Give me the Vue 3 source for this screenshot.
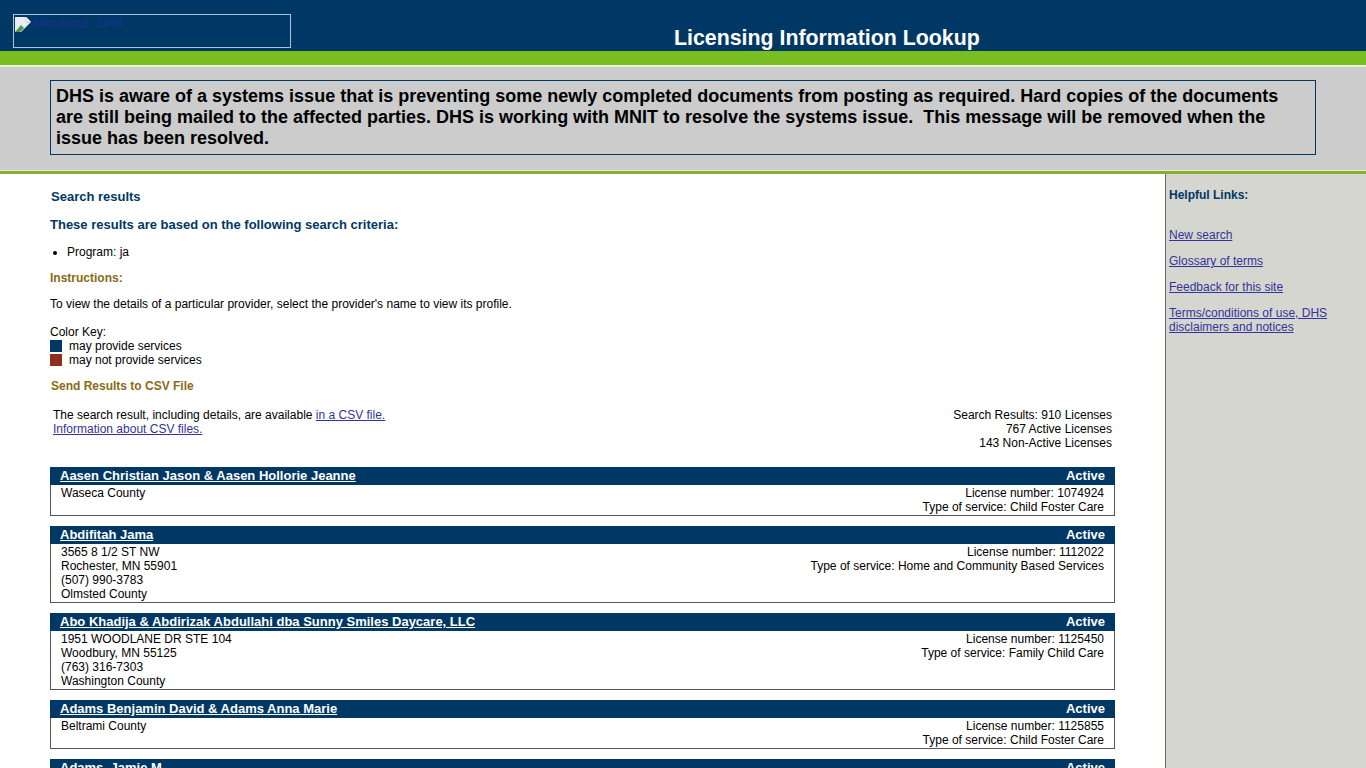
<script setup>
const links = ['New search', 'Glossary of terms', 'Feedback for this site', 'Terms/conditions of use, DHS disclaimers and notices']

const results = [
  { name: 'Aasen Christian Jason & Aasen Hollorie Jeanne', address: ['Waseca County'], license: '1074924', service: 'Child Foster Care' },
  { name: 'Abdifitah Jama', address: ['3565 8 1/2 ST NW', 'Rochester, MN 55901', '(507) 990-3783', 'Olmsted County'], license: '1112022', service: 'Home and Community Based Services' },
  { name: 'Abo Khadija & Abdirizak Abdullahi dba Sunny Smiles Daycare, LLC', address: ['1951 WOODLANE DR STE 104', 'Woodbury, MN 55125', '(763) 316-7303', 'Washington County'], license: '1125450', service: 'Family Child Care' },
  { name: 'Adams Benjamin David & Adams Anna Marie', address: ['Beltrami County'], license: '1125855', service: 'Child Foster Care' },
  { name: 'Adams, Jamie M', address: ['Hennepin County'], license: '1100000', service: 'Child Foster Care' }
]
</script>

<template>
  <div class="page">
    <header class="top">
      <a class="logo" href="#">
        <svg width="18" height="17" viewBox="0 0 18 17">
          <path d="M1 1h11l5 5-5 5-5 5H1z" fill="#e8eef2" />
          <path d="M1 16l6-7 3 3-4 4z" fill="#4f9a4a" />
          <path d="M12 1v5h5" fill="#fff" stroke="#9aa" stroke-width="0.5" />
        </svg>
        <span>Minnesota&nbsp;&nbsp;&nbsp;DHS</span>
      </a>
      <h1>Licensing Information Lookup</h1>
    </header>
    <div class="green"></div>
    <div class="band">
      <div class="notice">DHS is aware of a systems issue that is preventing some newly completed documents from posting as required. Hard copies of the documents are still being mailed to the affected parties. DHS is working with MNIT to resolve the systems issue.&nbsp; This message will be removed when the issue has been resolved.</div>
    </div>
    <div class="columns">
      <main class="content">
        <h2 class="first">Search results</h2>
        <h2 class="criteria">These results are based on the following search criteria:</h2>
        <ul>
          <li>Program: ja</li>
        </ul>
        <h3>Instructions:</h3>
        <p class="intro">To view the details of a particular provider, select the provider's name to view its profile.</p>
        <div class="key">
          <div>Color Key:</div>
          <div class="key-row"><i class="swatch navy"></i>may provide services</div>
          <div class="key-row"><i class="swatch red"></i>may not provide services</div>
        </div>
        <h3 class="csv">Send Results to CSV File</h3>
        <div class="summary">
          <div>The search result, including details, are available <a href="#">in a CSV file.</a><br><a href="#">Information about CSV files.</a></div>
          <div class="counts">Search Results: 910 Licenses<br>767 Active Licenses<br>143 Non-Active Licenses</div>
        </div>
        <section v-for="item in results" :key="item.license" class="result">
          <div class="result-head">
            <a href="#">{{ item.name }}</a>
            <span>Active</span>
          </div>
          <div class="result-body">
            <div>
              <div v-for="line in item.address" :key="line">{{ line }}</div>
            </div>
            <div class="right">License number: {{ item.license }}<br>Type of service: {{ item.service }}</div>
          </div>
        </section>
      </main>
      <aside class="side">
        <h4>Helpful Links:</h4>
        <a v-for="link in links" :key="link" href="#">{{ link }}</a>
      </aside>
    </div>
  </div>
</template>

<style>
html, body {
  height: 768px;
  overflow: hidden;
}
</style>

<style scoped>
.page {
  height: 768px;
  overflow: hidden;
  font-family: "Liberation Sans", Arial, sans-serif;
  font-size: 12px;
  line-height: 14px;
  color: #000;
  background: #fff;
}
a {
  color: #333399;
}
.top {
  height: 51px;
  background: #003865;
  display: flex;
  box-sizing: border-box;
  padding: 14px 0 0 13px;
}
.logo {
  width: 278px;
  height: 34px;
  box-sizing: border-box;
  border: 1px solid #a9c4dc;
  display: flex;
  align-items: flex-start;
  color: #1b2f8f;
  font-size: 12px;
  text-decoration: none;
}
.logo svg {
  margin: 1px 0 0 0;
}
.logo span {
  margin: 1px 0 0 1px;
}
.top h1 {
  margin: 12px 0 0 383px;
  font-size: 21.33px;
  line-height: 24px;
  color: #fff;
  font-weight: bold;
}
.green {
  height: 14px;
  background: #78be20;
}
.band {
  height: 106px;
  box-sizing: border-box;
  padding: 13px 50px 0;
  background: #cccccc;
  border-top: 2px solid #eef0d4;
  border-bottom: 1px solid #e6eccc;
}
.notice {
  box-sizing: border-box;
  height: 75px;
  border: 1px solid #003865;
  padding: 5px;
  font-size: 18px;
  line-height: 21px;
  font-weight: bold;
}
.columns {
  display: flex;
  height: 594px;
  border-top: 3px solid #84b135;
}
.content {
  width: 1165px;
  box-sizing: border-box;
  padding: 0 50px;
}
h2, h3, h4 {
  margin: 0;
  font-size: 12px;
  font-weight: bold;
}
h2 {
  color: #003865;
  font-size: 13px;
}
.first {
  margin: 16px 0 0 1px;
}
.criteria {
  margin-top: 14px;
}
ul {
  margin: 13px 0 0;
  padding-left: 17px;
}
h3 {
  color: #8a6a14;
  margin-top: 12px;
}
.intro {
  margin: 12px 0 0;
}
.key {
  margin-top: 14px;
}
.key-row {
  display: flex;
  align-items: center;
}
.swatch {
  width: 12px;
  height: 12px;
  margin-right: 7px;
}
.navy {
  background: #003865;
}
.red {
  background: #8c2f1f;
}
.csv {
  margin: 12px 0 0 1px;
}
.summary {
  display: flex;
  justify-content: space-between;
  padding: 0 3px;
  margin-top: 15px;
}
.counts {
  text-align: right;
}
.result {
  margin-top: 10px;
}
.summary + .result {
  margin-top: 17px;
}
.result-head {
  height: 18px;
  background: #003865;
  color: #fff;
  display: flex;
  justify-content: space-between;
  padding: 0 10px;
  font-size: 13px;
  line-height: 17px;
  font-weight: bold;
}
.result-head a {
  color: #fff;
}
.result-body {
  display: flex;
  justify-content: space-between;
  border: 1px solid #555;
  border-top: 0;
  padding: 1px 10px;
  min-height: 28px;
}
.right {
  text-align: right;
}
.side {
  flex: 1;
  box-sizing: border-box;
  background: #d6d6d0;
  border-left: 1px solid #666;
  padding: 14px 30px 0 3px;
}
.side h4 {
  color: #003865;
  margin-bottom: 26px;
}
.side a {
  display: block;
  margin-bottom: 12px;
}
</style>
